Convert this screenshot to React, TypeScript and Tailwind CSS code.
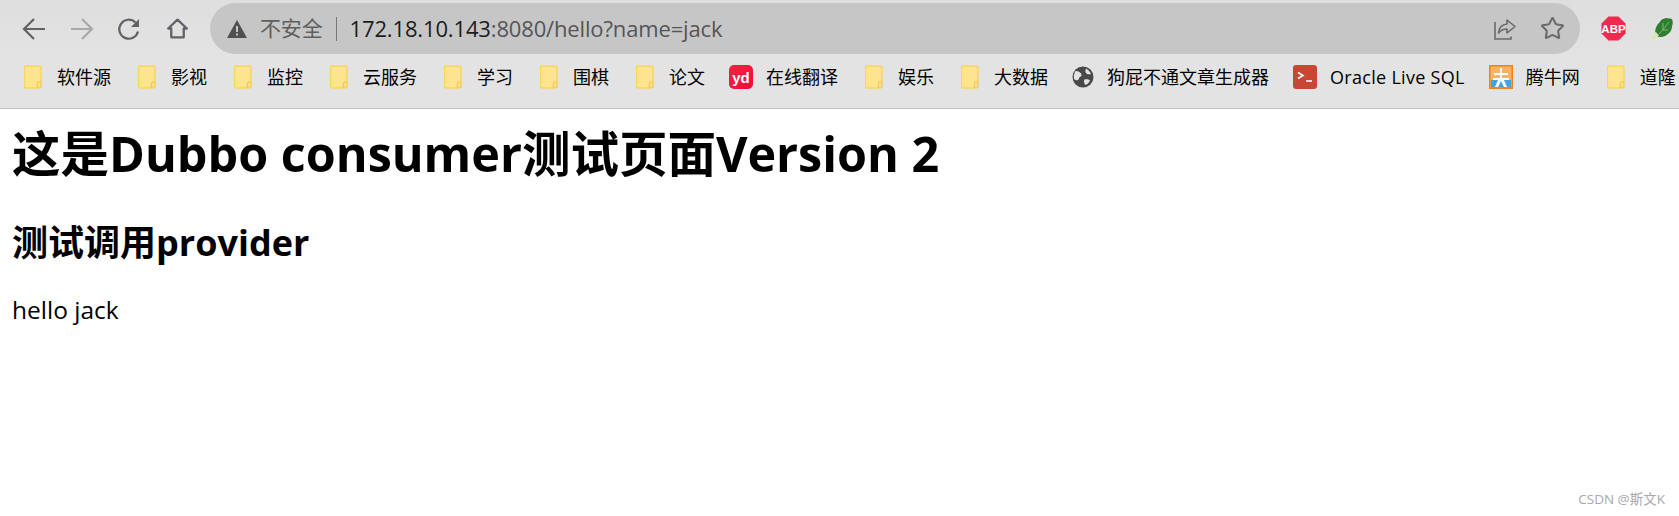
import { Star } from "lucide-react"

const font = "font-['Open_Sans','Noto_Sans_CJK_SC',sans-serif]"

function FolderIcon() {
  return (
    <svg width="18" height="24" viewBox="0 0 18 24" className="shrink-0">
      <path d="M2 1h13a2 2 0 0 1 2 2v14h-1.5a2 2 0 0 0-2 2v4H2a1.5 1.5 0 0 1-1.5-1.5v-20A1.5 1.5 0 0 1 2 1z" fill="#ffe48f" stroke="#f6d561" strokeWidth="1.4" />
      <rect x="13.5" y="17" width="3.5" height="6" rx="1.5" fill="#ffe48f" stroke="#f0c84a" strokeWidth="1.2" />
    </svg>
  )
}

function YoudaoIcon() {
  return (
    <div className="flex h-6 w-6 shrink-0 items-center justify-center rounded-[5px] bg-gradient-to-br from-[#f5213f] to-[#f10a3a] text-[15px] leading-none font-bold text-white font-['Liberation_Sans',sans-serif]">
      yd
    </div>
  )
}

function GlobeIcon() {
  return (
    <svg width="22" height="22" viewBox="0 0 22 22" className="shrink-0">
      <circle cx="11" cy="11" r="10.5" fill="#48494b" />
      <path d="M3.500 5c2.500 0 5.500 1.500 6 3.500s-2 2-2.500 4-2.500 2.500-5 .5c-.5-3 0-6 1.500-8zM14 2.500c2 1 4 3 5 5.500-2 .5-4 .5-5-1s-.5-3 0-4.500zM12.500 13.500c2-.5 4.500 0 5.500 1-1 2-2.500 3.500-4.500 4.500-1.500-1-2-4.500-1-5.500z" fill="#e4e4e4" />
    </svg>
  )
}

function OracleIcon() {
  return (
    <div className="flex h-6 w-6 shrink-0 items-center justify-center rounded-[3px] bg-[#c74634]">
      <svg width="16" height="12" viewBox="0 0 16 12" fill="none" stroke="#fff" strokeWidth="1.6">
        <path d="M1 1.500 6 4.500 1 7.500" />
        <path d="M9 10h6" />
      </svg>
    </div>
  )
}

function TengniuIcon() {
  return (
    <svg width="24" height="24" viewBox="0 0 24 24" className="shrink-0">
      <rect width="24" height="24" fill="#f08311" />
      <rect x="1.500" y="1.500" width="21" height="21" fill="#f5b26a" />
      <path d="M2 15h20v7.500H2z" fill="#3da4e8" />
      <path d="M11 3h2v5h6v2h-6v3h7v2h-5l3 7h-3l-3-6-3 6H6l3-7H4v-2h7v-3H5V8h6z" fill="#fff" />
    </svg>
  )
}

function Bookmark({ icon, label, className }: { icon: React.ReactNode; label: string; className: string }) {
  return (
    <div className={`flex shrink-0 items-center ${className}`}>
      {icon}
      <span className="whitespace-nowrap">{label}</span>
    </div>
  )
}

export default function App() {
  return (
    <div className={`relative h-[516px] w-[1679px] overflow-hidden bg-white text-black ${font}`}>
      {/* Toolbar */}
      <div className="flex h-[57px] items-start bg-gradient-to-b from-[#dedede] to-[#e3e3e3] pt-[3px]">
        <div className="flex h-[51px] w-[210px] shrink-0 items-center pl-[22px] text-[#5f6368]">
          <svg width="24" height="24" viewBox="0 0 24 24" fill="none" stroke="currentColor" strokeWidth="2.200">
            <path d="M23 12H2M12 2 2 12l10 10" />
          </svg>
          <svg width="24" height="24" viewBox="0 0 24 24" fill="none" stroke="#a9a9a9" strokeWidth="2.200" className="ml-[24px]">
            <path d="M1 12h21M12 2l10 10-10 10" />
          </svg>
          <svg width="24" height="24" viewBox="0 0 24 24" fill="none" stroke="currentColor" strokeWidth="2.200" className="ml-[23px]">
            <path d="M21 14.500A9.500 9.500 0 1 1 18.500 5.500" />
            <path d="M22 2v8h-8z" fill="currentColor" stroke="none" />
          </svg>
          <svg width="25" height="25" viewBox="0 0 24 24" fill="none" stroke="currentColor" strokeWidth="2.200" className="ml-[24px]">
            <path d="M12 3.500 3 12h3v8.500h12V12h3z" strokeLinejoin="round" />
          </svg>
        </div>
        <div className="flex h-[51px] w-[1370px] shrink-0 items-center rounded-full bg-[#c6c6c6] pl-[17px] text-[22px] tracking-[-0.15px]">
          <svg width="20" height="18" viewBox="0 0 20 18" className="shrink-0">
            <path d="M10 0 20 18H0z" fill="#505050" />
            <path d="M9 6h2v6H9zM9 13.500h2v2H9z" fill="#c6c6c6" />
          </svg>
          <span className="ml-[13px] text-[21px] text-[#5f5f5f]">不安全</span>
          <div className="ml-[13px] h-[24px] w-px bg-[#777]" />
          <span className="ml-[13px] text-[#1c1c1c]">172.18.10.143</span>
          <span className="text-[#555]">:8080/hello?name=jack</span>
          <div className="ml-auto flex items-center pr-[15px] text-[#6a6a6a]">
            <svg width="24" height="24" viewBox="0 0 24 24" fill="none" stroke="currentColor" strokeWidth="1.600">
              <path d="M2 5v17h16v-2.500" />
              <path d="M14 3v4C9 7.500 6 10.500 5.500 16c2.500-3 5-4 8.500-4v4l8-6.500z" strokeLinejoin="round" />
            </svg>
            <Star size={25} strokeWidth={2} className="ml-[23px]" />
          </div>
        </div>
        <div className="flex h-[51px] flex-1 items-center pl-[21px]">
          <svg width="25" height="25" viewBox="0 0 25 25" className="shrink-0">
            <path d="M7.500 0.500h10l7 7v10l-7 7h-10l-7-7v-10z" fill="#f0294e" />
            <text x="12.500" y="16.500" textAnchor="middle" fontSize="11.500" fontWeight="700" fill="#fff" fontFamily="Liberation Sans, sans-serif">ABP</text>
          </svg>
          <svg width="22" height="24" viewBox="0 0 22 24" className="ml-[25px] shrink-0">
            <path d="M5 19C3 14 5 8 9 5c1-3 5-4 7-4 1 1 3 0 5 1 1 3 1 5 0 7 0 3-1 6-4 8-3 3-8 4-12 2z" fill="#2f7d32" />
            <path d="M8 17c3-3 6-7 10-12M11 13l6 0M12 12l0-6" stroke="#7fb96a" strokeWidth="1" fill="none" />
            <path d="M0.500 23c0-3 2-7 4.500-8 1 1 2 3 3 3-2 3-5 5-7.500 5z" fill="#dbe8b4" />
          </svg>
        </div>
      </div>

      {/* Bookmarks bar */}
      <div className="flex h-[52px] items-start overflow-hidden border-b border-[#bfbfbf] bg-[#e3e3e3] pt-[8px] pl-[24px] text-[18px] leading-[24px] text-black">
        <Bookmark icon={<><FolderIcon /><span className="w-[15px]" /></>} label="软件源" className="mr-[27px]" />
        <Bookmark icon={<><FolderIcon /><span className="w-[15px]" /></>} label="影视" className="mr-[27px]" />
        <Bookmark icon={<><FolderIcon /><span className="w-[15px]" /></>} label="监控" className="mr-[27px]" />
        <Bookmark icon={<><FolderIcon /><span className="w-[15px]" /></>} label="云服务" className="mr-[27px]" />
        <Bookmark icon={<><FolderIcon /><span className="w-[15px]" /></>} label="学习" className="mr-[27px]" />
        <Bookmark icon={<><FolderIcon /><span className="w-[15px]" /></>} label="围棋" className="mr-[27px]" />
        <Bookmark icon={<><FolderIcon /><span className="w-[15px]" /></>} label="论文" className="mr-[24px]" />
        <Bookmark icon={<><YoudaoIcon /><span className="w-[13px]" /></>} label="在线翻译" className="mr-[27px]" />
        <Bookmark icon={<><FolderIcon /><span className="w-[15px]" /></>} label="娱乐" className="mr-[27px]" />
        <Bookmark icon={<><FolderIcon /><span className="w-[15px]" /></>} label="大数据" className="mr-[24px]" />
        <Bookmark icon={<><GlobeIcon /><span className="w-[13px]" /></>} label="狗屁不通文章生成器" className="mr-[24px]" />
        <Bookmark icon={<><OracleIcon /><span className="w-[13px]" /></>} label="Oracle Live SQL" className="mr-[24px] tracking-[0.3px]" />
        <Bookmark icon={<><TengniuIcon /><span className="w-[13px]" /></>} label="腾牛网" className="mr-[27px]" />
        <Bookmark icon={<><FolderIcon /><span className="w-[15px]" /></>} label="道隆" className="" />
      </div>

      {/* Page content */}
      <div className="px-[12px] pt-[12px]">
        <h1 className="text-[48.500px] leading-[64px] font-bold whitespace-nowrap">这是Dubbo consumer测试页面Version 2</h1>
        <h2 className="mt-[34px] text-[36px] leading-[48px] font-bold whitespace-nowrap">测试调用provider</h2>
        <p className="mt-[26px] text-[24.500px] leading-[33px]">hello jack</p>
      </div>

      <div className="absolute right-[14px] bottom-[9px] text-[13.500px] leading-[16px] text-[#a8a8a8]">CSDN @斯文K</div>
    </div>
  )
}
